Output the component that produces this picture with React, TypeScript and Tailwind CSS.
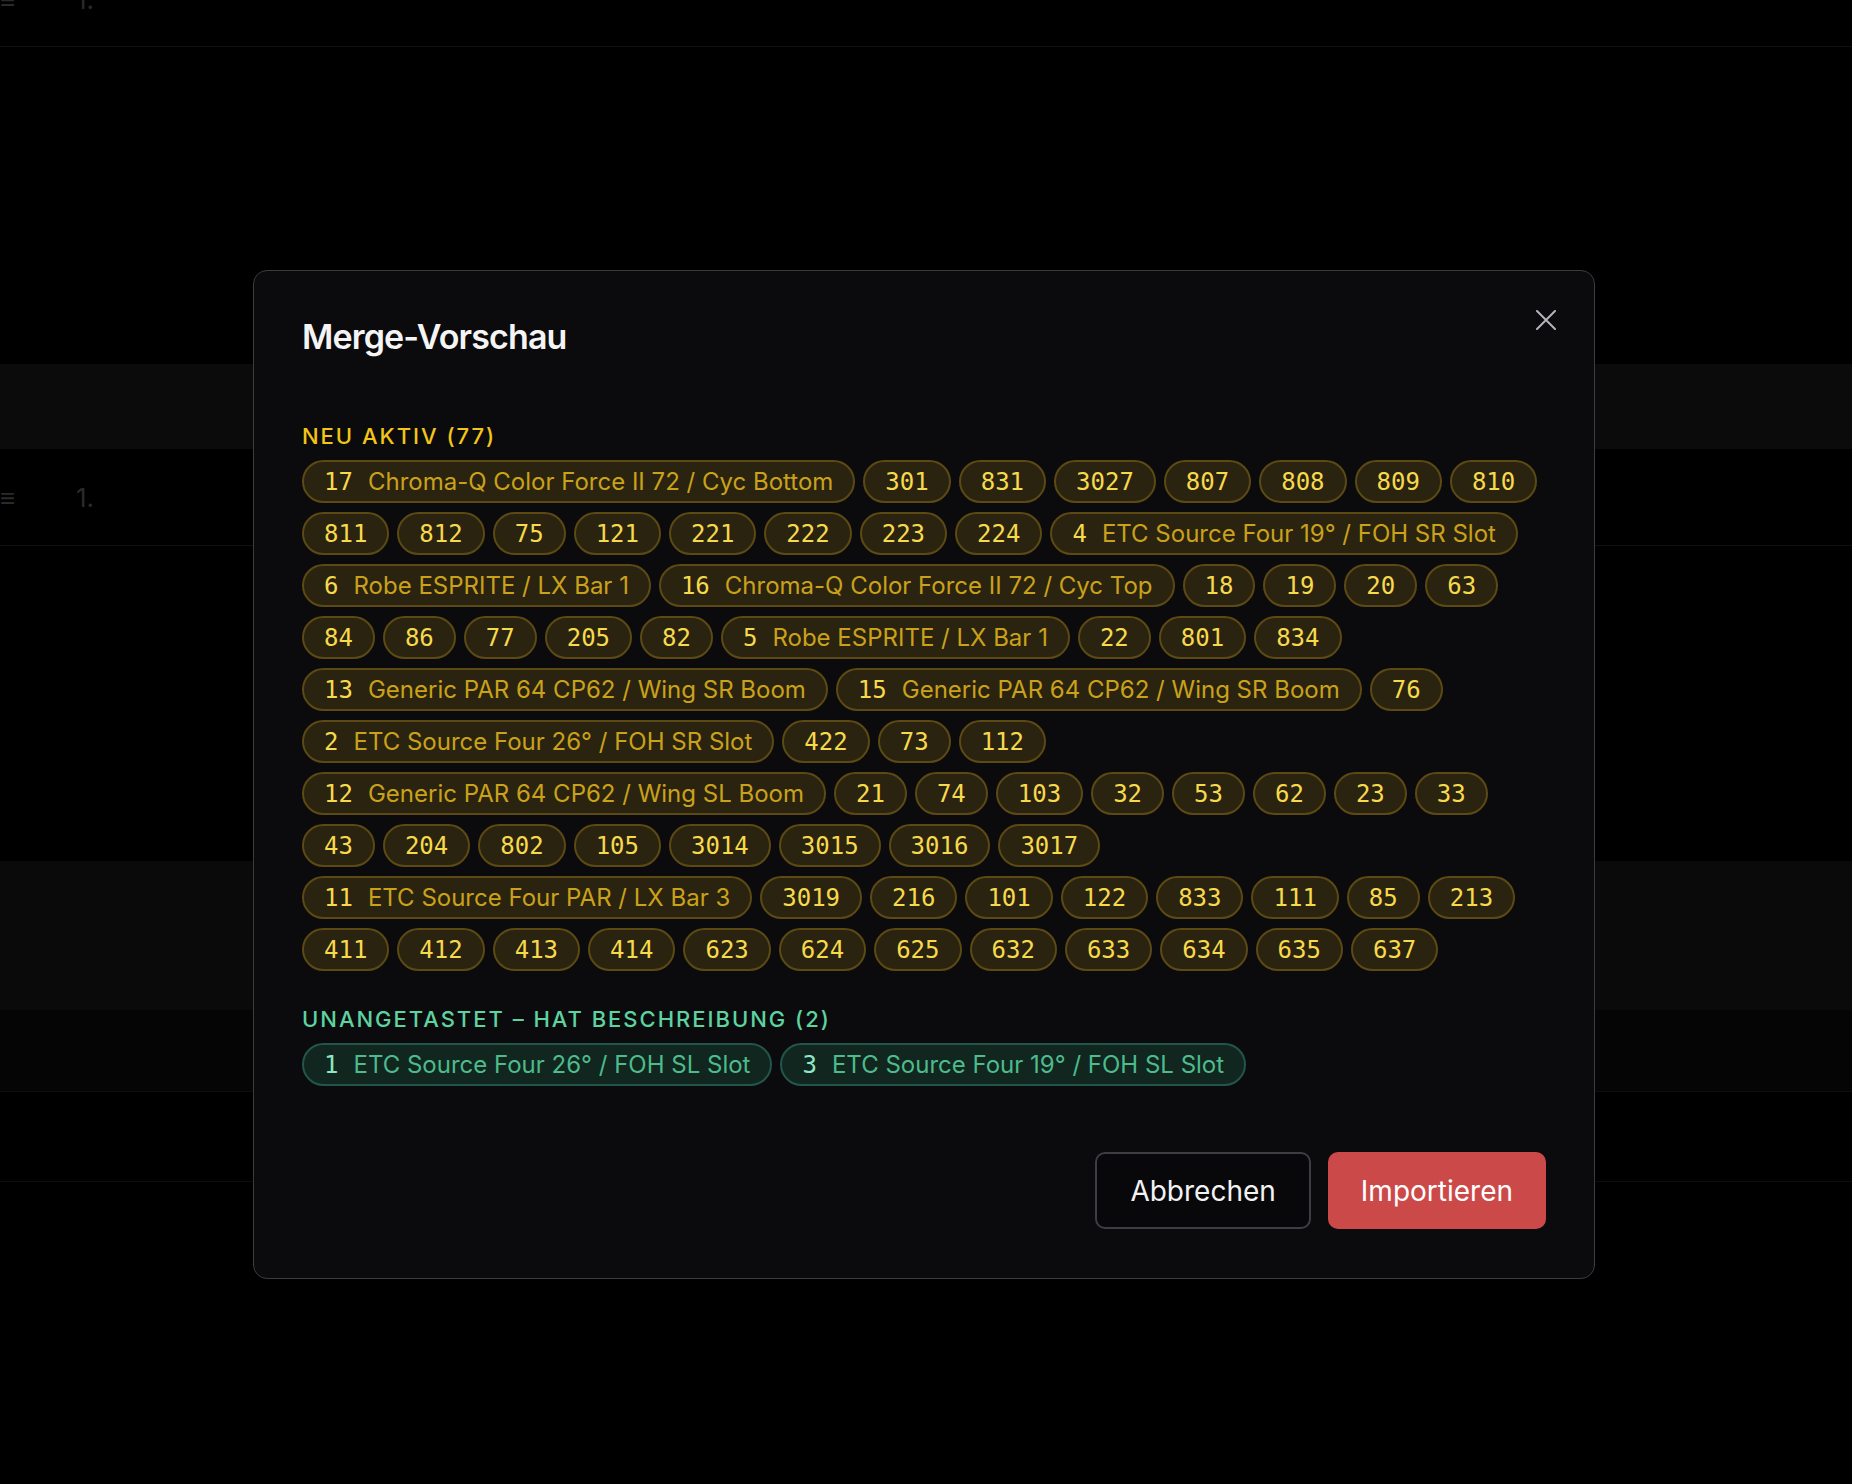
import React from "react";

// Vorschau beim Zusammenführen: gelb = wird neu aktiv, grün = bleibt unberührt.
type Chip = [string, string?];

const neuAktiv: Chip[] = [
  ["17", "Chroma-Q Color Force II 72 / Cyc Bottom"],
  ["301"], ["831"], ["3027"], ["807"], ["808"], ["809"], ["810"],
  ["811"], ["812"], ["75"], ["121"], ["221"], ["222"], ["223"], ["224"],
  ["4", "ETC Source Four 19° / FOH SR Slot"],
  ["6", "Robe ESPRITE / LX Bar 1"],
  ["16", "Chroma-Q Color Force II 72 / Cyc Top"],
  ["18"], ["19"], ["20"], ["63"],
  ["84"], ["86"], ["77"], ["205"], ["82"],
  ["5", "Robe ESPRITE / LX Bar 1"],
  ["22"], ["801"], ["834"],
  ["13", "Generic PAR 64 CP62 / Wing SR Boom"],
  ["15", "Generic PAR 64 CP62 / Wing SR Boom"],
  ["76"],
  ["2", "ETC Source Four 26° / FOH SR Slot"],
  ["422"], ["73"], ["112"],
  ["12", "Generic PAR 64 CP62 / Wing SL Boom"],
  ["21"], ["74"], ["103"], ["32"], ["53"], ["62"], ["23"], ["33"],
  ["43"], ["204"], ["802"], ["105"], ["3014"], ["3015"], ["3016"], ["3017"],
  ["11", "ETC Source Four PAR / LX Bar 3"],
  ["3019"], ["216"], ["101"], ["122"], ["833"], ["111"], ["85"], ["213"],
  ["411"], ["412"], ["413"], ["414"], ["623"], ["624"], ["625"], ["632"], ["633"], ["634"], ["635"], ["637"],
];

const unangetastet: Chip[] = [
  ["1", "ETC Source Four 26° / FOH SL Slot"],
  ["3", "ETC Source Four 19° / FOH SL Slot"],
];

const sans = "font-['Inter','Noto_Sans',sans-serif]";
const mono = "font-['DejaVu_Sans_Mono','Liberation_Mono',monospace]";

function ChipPill({ chip, tone }: { chip: Chip; tone: "yellow" | "green" }) {
  const [num, name] = chip;
  const box =
    tone === "yellow"
      ? "border-[#5c4913] bg-[#2a2310]"
      : "border-[#22564a] bg-[#11261f]";
  const numColor = tone === "yellow" ? "text-[#f7d94c]" : "text-[#8fe7c3]";
  const nameColor = tone === "yellow" ? "text-[#caa21a]" : "text-[#4dbb8c]";
  return (
    <span className={`flex h-[43px] items-center gap-[15px] rounded-full border-2 px-5 ${box}`}>
      <span className={`${mono} text-[24px] leading-none ${numColor}`}>{num}</span>
      {name && <span className={`${sans} text-[24px] leading-none ${nameColor}`}>{name}</span>}
    </span>
  );
}

function PageRow({ label }: { label: string }) {
  return (
    <div className={`flex items-center gap-[60px] ${sans} text-[26px] text-[#2a2a2a]`}>
      <span className="w-4">≡</span>
      <span>{label}</span>
    </div>
  );
}

export default function App() {
  return (
    <div className="relative h-[1484px] w-full overflow-hidden bg-black">
      <div className="flex flex-col">
        <div className="h-[47px] overflow-hidden border-b border-[#101010]">
          <div className="-mt-[49px] flex h-[97px] items-center">
            <PageRow label="1." />
          </div>
        </div>
        <div className="h-[317px]" />
        <div className="h-[85px] bg-[#0b0b0b]" />
        <div className="flex h-[97px] items-center border-b border-[#101010]">
          <PageRow label="1." />
        </div>
        <div className="h-[315px]" />
        <div className="h-[149px] bg-[#0a0a0a]" />
        <div className="h-[82px] border-b border-[#0e0e0e] bg-[#050505]" />
        <div className="h-[90px] border-b border-[#0e0e0e]" />
      </div>

      <div className="absolute inset-0 flex pl-[253px] pt-[270px]">
        <div className="relative h-fit w-[1342px] rounded-[14px] border border-[#3b3b41] bg-[#0b0b0d] px-12 pb-[49px] pt-[45px]">
          <button type="button" aria-label="Schließen" className="absolute right-[38px] top-[39px] text-[#b4b4bc]">
            <svg width="20" height="20" viewBox="0 0 20 20" fill="none" stroke="currentColor" strokeWidth="2" strokeLinecap="round">
              <path d="M1 1l18 18M19 1L1 19" />
            </svg>
          </button>

          <h2 className={`${sans} text-[34px] font-semibold leading-[41px] tracking-tight text-[#f4f4f5]`}>Merge-Vorschau</h2>

          <h3 className={`${sans} mt-[63px] text-[22px] font-medium leading-[32px] tracking-[0.09em] text-[#f3c517]`}>
            NEU AKTIV (77)
          </h3>
          <div className="mt-2 flex flex-wrap gap-x-2 gap-y-[9px]">
            {neuAktiv.map((c, i) => (
              <ChipPill key={i} chip={c} tone="yellow" />
            ))}
          </div>

          <h3 className={`${sans} mt-[32px] text-[22px] font-medium leading-[32px] tracking-[0.09em] text-[#5dd3a0]`}>
            UNANGETASTET – HAT BESCHREIBUNG (2)
          </h3>
          <div className="mt-2 flex flex-wrap gap-x-2 gap-y-[9px]">
            {unangetastet.map((c, i) => (
              <ChipPill key={i} chip={c} tone="green" />
            ))}
          </div>

          <div className="mt-[66px] flex justify-end gap-[17px]">
            <button
              type="button"
              className={`${sans} h-[77px] rounded-[10px] border-2 border-[#3d3d44] bg-[#08080a] px-[33px] text-[28px] text-[#f2f2f3]`}
            >
              Abbrechen
            </button>
            <button
              type="button"
              className={`${sans} h-[77px] rounded-[10px] bg-[#cc4949] px-[33px] text-[28px] text-white`}
            >
              Importieren
            </button>
          </div>
        </div>
      </div>
    </div>
  );
}
